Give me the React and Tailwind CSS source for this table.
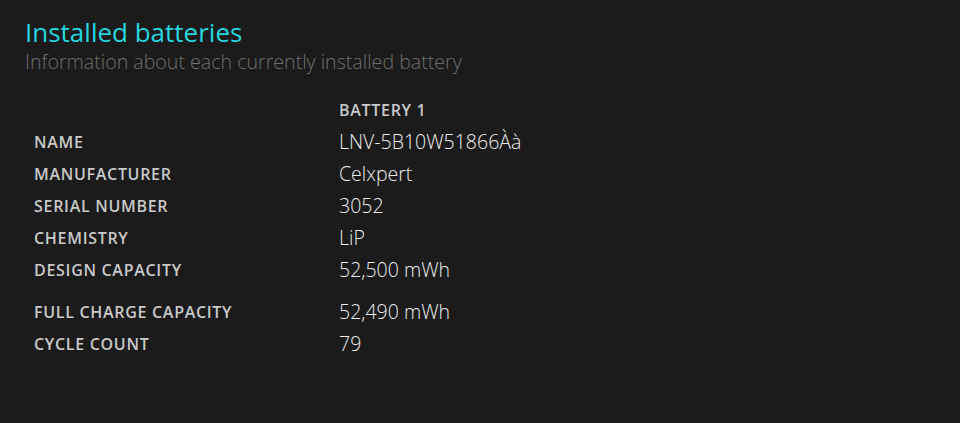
import React from "react";

const rows = [
    ["NAME", "LNV-5B10W51866Àà"],
    ["MANUFACTURER", "Celxpert"],
    ["SERIAL NUMBER", "3052"],
    ["CHEMISTRY", "LiP"],
    ["DESIGN CAPACITY", "52,500 mWh"],
    ["FULL CHARGE CAPACITY", "52,490 mWh", true],
    ["CYCLE COUNT", "79"],
];

export default function App() {
    return (
        <div
            className="w-[960px] h-[423px] bg-[#1b1b1b] overflow-hidden pl-[25px] pt-[15px]"
            style={{ fontFamily: '"Open Sans", "Noto Sans", sans-serif' }}
        >
            <h1 className="text-[26px] leading-[34px] text-[#26d6e0]">
                Installed batteries
            </h1>
            <p className="text-[19.6px] leading-[26px] font-light text-[#6e6e6e]">
                Information about each currently installed battery
            </p>

            <div className="mt-[19px] pl-[9px]">
                <div className="grid grid-cols-[305px_auto] items-center h-[32px]">
                    <div />
                    <div className="text-[16px] font-semibold tracking-[0.7px] text-[#c9c9c9]">
                        BATTERY 1
                    </div>
                </div>
                {rows.map(([label, value, gap]) => (
                    <div
                        key={label}
                        className={
                            "grid grid-cols-[305px_auto] items-center h-[32px] " +
                            (gap ? "mt-[10px]" : "")
                        }
                    >
                        <div className="text-[16px] font-semibold tracking-[0.7px] text-[#c9c9c9]">
                            {label}
                        </div>
                        <div className="text-[19.5px] font-light text-[#ececec]">
                            {value}
                        </div>
                    </div>
                ))}
            </div>
        </div>
    );
}
